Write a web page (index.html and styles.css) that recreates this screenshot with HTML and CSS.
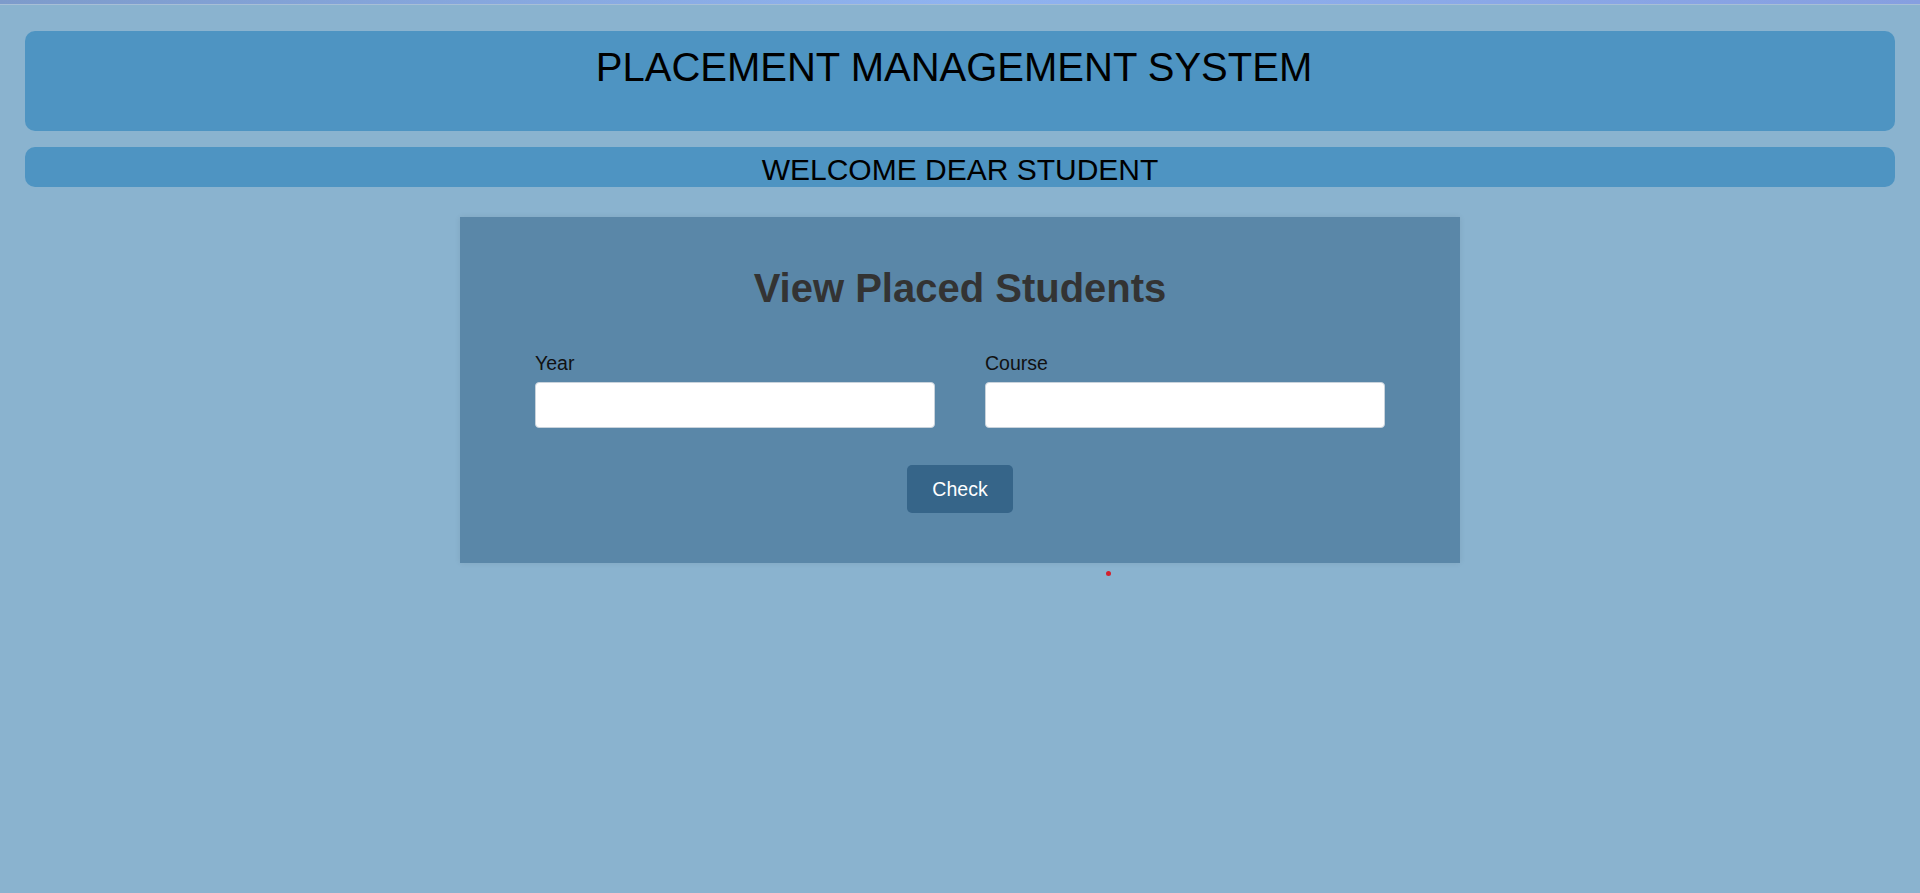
FILE: index.html
```html
<!DOCTYPE html>
<html lang="en">
<head>
<meta charset="utf-8">
<title>Placement Management System</title>
<link rel="stylesheet" href="styles.css">
</head>
<body>
<div class="topbar"></div>
<div class="page">
  <header class="banner">
    <h1 class="banner-title">PLACEMENT MANAGEMENT SYSTEM</h1>
  </header>
  <div class="welcome">WELCOME DEAR STUDENT</div>
  <main class="card">
    <h2 class="card-title">View Placed Students</h2>
    <form class="form">
      <div class="fields">
        <div class="field">
          <label class="label" for="year">Year</label>
          <input class="input" id="year" type="text">
        </div>
        <div class="field">
          <label class="label" for="course">Course</label>
          <input class="input" id="course" type="text">
        </div>
      </div>
      <div class="actions">
        <button class="btn" type="button">Check</button>
      </div>
    </form>
  </main>
  <span class="dot"></span>
</div>
</body>
</html>
```
FILE: styles.css
```css
html, body {
  margin: 0;
  padding: 0;
}
body {
  background: #8ab3cf;
  font-family: "Liberation Sans", Arial, sans-serif;
  min-height: 893px;
}
.topbar {
  height: 4px;
  background: linear-gradient(90deg, #7d9bcb 0%, #8fb3f0 50%, #869fe0 100%);
  border-bottom: 1px solid #a7bfd6;
}
.page {
  position: relative;
  padding: 26px 25px 0;
}
.banner {
  box-sizing: border-box;
  height: 100px;
  background: #4e94c2;
  border-radius: 10px;
  padding-top: 13px;
}
.banner-title {
  margin: 0;
  font-weight: normal;
  font-size: 40px;
  line-height: 46px;
  color: #000;
  text-align: center;
  padding-right: 12px;
}
.welcome {
  box-sizing: border-box;
  margin-top: 16px;
  height: 40px;
  background: #4e94c2;
  border-radius: 10px;
  padding-top: 6px;
  font-size: 30px;
  line-height: 34px;
  color: #000;
  text-align: center;
}
.card {
  box-sizing: border-box;
  display: block;
  width: 1000px;
  margin: 30px auto 0;
  background: #5a87a8;
  box-shadow: 0 0 6px rgba(0, 0, 0, 0.08);
  padding: 48px 75px 50px;
}
.card-title {
  margin: 0;
  font-size: 40px;
  line-height: 46px;
  font-weight: bold;
  color: #333;
  text-align: center;
}
.form {
  margin: 42px 0 0;
}
.fields {
  display: flex;
  gap: 50px;
}
.field {
  flex: 1;
  display: flex;
  flex-direction: column;
}
.label {
  font-size: 19.5px;
  line-height: 21px;
  color: #111;
  margin-bottom: 8px;
}
.input {
  box-sizing: border-box;
  height: 46px;
  width: 100%;
  border: 1px solid #c9d3dc;
  border-radius: 4px;
  background: #fff;
  margin: 0;
}
.actions {
  display: flex;
  justify-content: center;
  margin-top: 37px;
}
.btn {
  box-sizing: border-box;
  height: 48px;
  padding: 0 25px;
  border: none;
  border-radius: 5px;
  background: #366589;
  color: #fff;
  font-family: "Liberation Sans", Arial, sans-serif;
  font-size: 19.5px;
}
.dot {
  position: absolute;
  left: 1106px;
  top: 566px;
  width: 5px;
  height: 5px;
  border-radius: 50%;
  background: #d3202c;
}
```
